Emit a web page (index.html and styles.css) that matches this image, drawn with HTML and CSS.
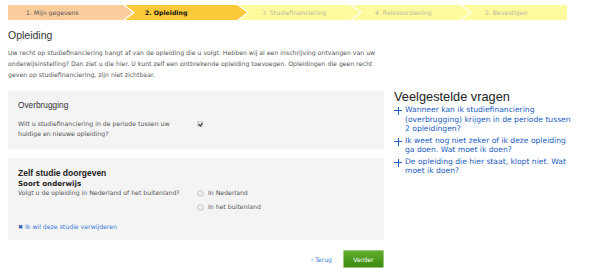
FILE: index.html
```html
<!DOCTYPE html>
<html lang="nl">
<head>
<meta charset="utf-8">
<title>Opleiding</title>
<link rel="stylesheet" href="styles.css">
</head>
<body>
<div class="page">
  <nav class="steps">
    <div class="step step-1 step-done">1. Mijn gegevens</div>
    <div class="step step-2 step-current">2. Opleiding</div>
    <div class="step step-3 step-todo">3. Studiefinanciering</div>
    <div class="step step-4 step-todo">4. Reisvoorziening</div>
    <div class="step step-5 step-todo">5. Bevestigen</div>
  </nav>
  <div class="layout">
    <main class="main">
      <h1 class="title">Opleiding</h1>
      <p class="intro">Uw recht op studiefinanciering hangt af van de opleiding die u volgt. Hebben wij al een inschrijving ontvangen van uw<br>onderwijsinstelling? Dan ziet u die hier. U kunt zelf een ontbrekende opleiding toevoegen. Opleidingen die geen recht<br>geven op studiefinanciering, zijn niet zichtbaar.</p>

      <section class="box box-bridge">
        <h2 class="box-title">Overbrugging</h2>
        <div class="row">
          <div class="label">Wilt u studiefinanciering in de periode tussen uw<br>huidige en nieuwe opleiding?</div>
          <div class="control"><span class="checkbox checked"></span></div>
        </div>
      </section>

      <section class="box box-study">
        <h2 class="box-title strong">Zelf studie doorgeven</h2>
        <h3 class="sub-title">Soort onderwijs</h3>
        <div class="row">
          <div class="label">Volgt u de opleiding in Nederland of het buitenland?</div>
          <div class="control radios">
            <label class="radio-option"><span class="radio"></span>In Nederland</label>
            <label class="radio-option"><span class="radio"></span>In het buitenland</label>
          </div>
        </div>
        <a class="remove" href="#"><span class="remove-x">✖</span>Ik wil deze studie verwijderen</a>
      </section>

      <div class="actions">
        <a class="back" href="#">‹ Terug</a>
        <button class="next" type="button">Verder</button>
      </div>
    </main>

    <aside class="faq">
      <h2 class="faq-title">Veelgestelde vragen</h2>
      <ul class="faq-list">
        <li class="faq-item"><span class="plus"></span><a href="#">Wanneer kan ik studiefinanciering<br>(overbrugging) krijgen in de periode tussen<br>2 opleidingen?</a></li>
        <li class="faq-item"><span class="plus"></span><a href="#">Ik weet nog niet zeker of ik deze opleiding<br>ga doen. Wat moet ik doen?</a></li>
        <li class="faq-item"><span class="plus"></span><a href="#">De opleiding die hier staat, klopt niet. Wat<br>moet ik doen?</a></li>
      </ul>
    </aside>
  </div>
</div>
</body>
</html>
```

FILE: styles.css
```css
* { box-sizing: border-box; }

html, body {
  margin: 0;
  padding: 0;
  background: #ffffff;
}

body {
  font-family: "DejaVu Sans", Verdana, sans-serif;
  font-size: 6.2px;
  color: #555555;
  overflow: hidden;
}

.page {
  padding: 5px 0 0 8px;
}

/* ---------- steps ---------- */
.steps {
  display: flex;
  width: 559px;
  height: 15px;
}

.step {
  flex: none;
  height: 15px;
  line-height: 15px;
  padding-left: 23px;
  font-size: 6.2px;
  white-space: nowrap;
  margin-left: -8px;
  clip-path: polygon(0 0, calc(100% - 10px) 0, 100% 50%, calc(100% - 10px) 100%, 0 100%, 10px 50%);
}

.step-1 {
  width: 125px;
  margin-left: 0;
  padding-left: 18px;
  clip-path: polygon(0 0, calc(100% - 10px) 0, 100% 50%, calc(100% - 10px) 100%, 0 100%);
}

.step-2 { width: 122px; padding-left: 20px; }
.step-3 { width: 121px; }
.step-4 { width: 118px; }

.step-5 {
  flex: 1 1 auto;
  clip-path: polygon(0 0, 100% 0, 100% 100%, 0 100%, 10px 50%);
}

.step-done {
  background: #fbcc9c;
  color: #555555;
}

.step-current {
  background: #fcc93a;
  color: #111111;
  font-weight: bold;
}

.step-todo {
  background: #fdfb9e;
  color: #b9b9a0;
}

/* ---------- layout ---------- */
.layout {
  display: flex;
  gap: 10px;
  align-items: flex-start;
}

.main {
  width: 376px;
  flex: none;
}

.title {
  margin: 8px 0 0;
  font-family: "Liberation Sans", Arial, sans-serif;
  font-weight: normal;
  font-size: 10.5px;
  line-height: 14px;
  color: #333333;
}

.intro {
  margin: 5px 0 0;
  line-height: 11px;
  white-space: nowrap;
  color: #555555;
}

/* ---------- boxes ---------- */
.box {
  background: #f4f4f4;
  padding: 0 10px;
}

.box-bridge {
  margin-top: 11px;
  height: 58px;
  padding-top: 9px;
}

.box-study {
  margin-top: 9px;
  height: 82px;
  padding-top: 10px;
}

.box-title {
  margin: 0;
  font-family: "Liberation Sans", Arial, sans-serif;
  font-weight: normal;
  font-size: 8.3px;
  line-height: 11px;
  color: #333333;
}

.box-title.strong {
  font-weight: bold;
  font-size: 8.5px;
  color: #222222;
}

.box-bridge .row {
  margin-top: 8px;
}

.sub-title {
  margin: 0;
  font-family: "DejaVu Sans", Verdana, sans-serif;
  font-weight: bold;
  font-size: 7.1px;
  line-height: 9px;
  color: #222222;
}

.row {
  display: flex;
  line-height: 10px;
}

.label {
  width: 179px;
  flex: none;
  white-space: nowrap;
}

.control {
  display: flex;
  align-items: flex-start;
}

.radios {
  flex-direction: column;
  gap: 4px;
}

.checkbox {
  display: inline-block;
  width: 6px;
  height: 6px;
  margin-top: 2px;
  background: #e2e2e2;
  border: 1px solid #cfcfcf;
  position: relative;
}

.checkbox.checked::after {
  content: "";
  position: absolute;
  left: 1px;
  top: 0px;
  width: 2px;
  height: 3px;
  border-right: 1px solid #222;
  border-bottom: 1px solid #222;
  transform: rotate(40deg);
}

.radio-option {
  display: flex;
  align-items: center;
  gap: 4px;
  line-height: 10px;
  color: #555555;
}

.radio {
  display: inline-block;
  width: 7px;
  height: 7px;
  border-radius: 50%;
  background: radial-gradient(circle at 40% 40%, #f4f4f4, #d6d6d6);
  border: 1px solid #cccccc;
}

.remove {
  display: block;
  margin-top: 10px;
  color: #3a7bd5;
  text-decoration: none;
  line-height: 10px;
}

.remove-x {
  color: #1c4fa6;
  font-size: 6px;
  margin-right: 2px;
}

/* ---------- actions ---------- */
.actions {
  display: flex;
  justify-content: flex-end;
  align-items: center;
  gap: 11px;
  margin-top: 10px;
}

.back {
  color: #3a7bd5;
  text-decoration: none;
}

.next {
  width: 41px;
  height: 18px;
  padding: 0;
  font-family: "DejaVu Sans", Verdana, sans-serif;
  font-size: 6.2px;
  color: #ffffff;
  background: linear-gradient(#62ad2e, #3b8a12);
  border: 1px solid #9cc980;
  border-radius: 1px;
}

/* ---------- FAQ ---------- */
.faq {
  width: 205px;
  padding-top: 70px;
}

.faq-title {
  margin: 0;
  font-family: "Liberation Sans", Arial, sans-serif;
  font-weight: normal;
  font-size: 12.8px;
  line-height: 13px;
  color: #222222;
}

.faq-list {
  list-style: none;
  margin: 0;
  padding: 0;
}

.faq-item {
  display: flex;
  gap: 3px;
  margin-top: 2px;
  font-size: 7.6px;
  line-height: 9.5px;
}

.faq-item a {
  color: #1a5cc0;
  text-decoration: none;
  white-space: nowrap;
}

.plus {
  flex: none;
  width: 8px;
  height: 8px;
  margin-top: 2px;
  position: relative;
}

.plus::before,
.plus::after {
  content: "";
  position: absolute;
  background: #1f62c4;
}

.plus::before {
  left: 0;
  top: 3px;
  width: 8px;
  height: 1px;
}

.plus::after {
  left: 3.5px;
  top: 0;
  width: 1px;
  height: 8px;
}
```
